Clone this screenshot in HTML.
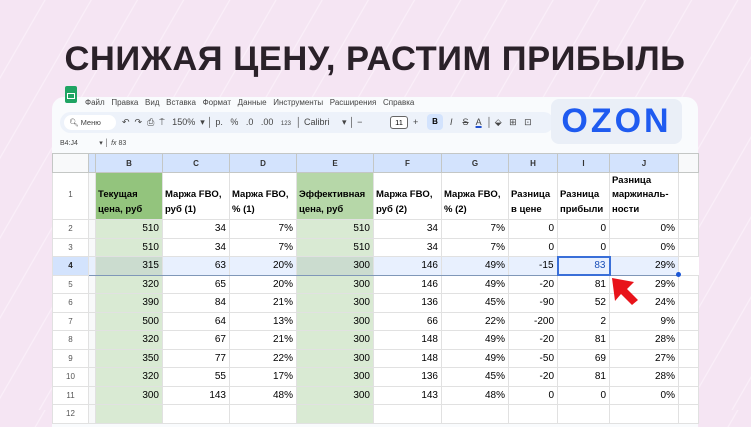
<!DOCTYPE html>
<html><head><meta charset="utf-8"><style>
*{margin:0;padding:0;box-sizing:border-box}
body{width:751px;height:410px;overflow:hidden;position:relative;font-family:"Liberation Sans",sans-serif;
background:repeating-linear-gradient(120deg,#f5e5f3 0px,#f5e5f3 38px,#fbf1fa 39px,#f5e5f3 40px);}
.title{position:absolute;left:52px;top:40px;width:646px;text-align:center;font-size:34.5px;font-weight:bold;color:#2a2129;letter-spacing:0.5px;white-space:nowrap}
.panel{position:absolute;left:52px;top:97px;width:646px;height:330px;background:#f9fbfd;border-radius:12px 12px 0 0}
.ab{position:absolute;white-space:nowrap}
.menu{top:98px;font-size:8px;color:#444}
.tb{position:absolute;left:60px;top:112px;width:494px;height:21px;background:#edf2fa;border-radius:11px}
.t{font-size:7.5px;color:#444}
.ozon{position:absolute;left:551px;top:99px;width:131px;height:45px;background:#eaeff7;border-radius:8px;color:#1f5bf0;font-size:34px;font-weight:bold;text-align:center;line-height:45px;letter-spacing:3px}
table{position:absolute;left:52px;top:153px;width:646px;border-collapse:collapse;table-layout:fixed;font-family:"Liberation Sans",sans-serif}
td{border:1px solid #e1e1e1;font-size:10px;text-align:right;padding:0 3px;height:18.5px;background:#fff;color:#000;overflow:hidden;white-space:nowrap}
tr.h td{background:#d3e3fd;text-align:center;font-weight:bold;font-size:8px;color:#333;height:19px;border-color:#c4c7c5}
td.rn{background:#fff;text-align:center;font-size:8px;color:#555}
tr.h td.rn{background:#f8f9fa}
td.gap{background:#f8f9fa;padding:0}
tr.r1 td{height:47px;text-align:left;font-weight:bold;font-size:9.5px;vertical-align:bottom;padding:0 2px 2px 2px;line-height:14.5px;white-space:normal}
tr.r1 td.rn{vertical-align:middle;text-align:center;font-weight:normal;font-size:8px}
td.g{background:#d9ead3}
tr.r1 td.gB{background:#93c47d}
tr.r1 td.gE{background:#b6d7a8}
tr.r4 td{background:#e8f0fe;border-top:1px solid #7f97b8;border-bottom:1px solid #7f97b8}
tr.r4 td.g{background:#cbdccf}
tr.r4 td.rn{background:#d3e3fd;font-weight:bold;color:#222;border-color:#e1e1e1}
tr.r4 td.sel{border:2px solid #3a6fd8;color:#1a4fb8}
</style></head><body>
<div class="title">СНИЖАЯ ЦЕНУ, РАСТИМ ПРИБЫЛЬ</div>
<div class="panel"></div>
<div class="ab" style="left:65px;top:86px;width:12px;height:17px;background:#1fa463;border-radius:2px"></div>
<div class="ab" style="left:67px;top:93px;width:8px;height:6px;border:1.5px solid #fff"></div>
<div class="ab menu" style="left:85px">Файл&nbsp;&nbsp; Правка&nbsp;&nbsp; Вид&nbsp;&nbsp; Вставка&nbsp;&nbsp; Формат&nbsp;&nbsp; Данные&nbsp;&nbsp; Инструменты&nbsp;&nbsp; Расширения&nbsp;&nbsp; Справка</div>
<div class="tb"></div>
<div class="ab" style="left:64px;top:115px;width:52px;height:15px;background:#fff;border-radius:8px"></div>
<div class="ab t" style="left:69px;top:118px">🔍︎ Меню</div>
<div class="ab t" style="left:122px;top:117px;font-size:9px">↶&nbsp; ↷&nbsp; ⎙&nbsp; ⍑&nbsp;&nbsp; 150%&nbsp; ▾ │ р.&nbsp;&nbsp; %&nbsp;&nbsp; .0&nbsp;&nbsp; .00&nbsp;&nbsp; <span style="font-size:6px">123</span>&nbsp; │ Calibri&nbsp;&nbsp;&nbsp;&nbsp; ▾ │ −</div>
<div class="ab" style="left:390px;top:116px;width:18px;height:13px;border:1px solid #666;border-radius:3px;font-size:7.5px;text-align:center;line-height:11px;background:#fff">11</div>
<div class="ab t" style="left:413px;top:117px;font-size:9px">+</div>
<div class="ab" style="left:427px;top:114px;width:16px;height:16px;background:#d3e3fd;border-radius:4px;font-size:8px;font-weight:bold;text-align:center;line-height:16px">B</div>
<div class="ab t" style="left:450px;top:117px;font-size:9px"><i>I</i>&nbsp;&nbsp;&nbsp; <s>S</s>&nbsp;&nbsp; <u style="text-decoration-color:#1f4fd0;text-decoration-thickness:2px">A</u>&nbsp; │ ⬙&nbsp;&nbsp; ⊞&nbsp;&nbsp; ⊡</div>
<div class="ozon">OZON</div>
<div class="ab" style="left:60px;top:139px;font-size:7px;color:#444">B4:J4&nbsp;&nbsp;&nbsp;&nbsp;&nbsp;&nbsp;&nbsp;&nbsp;&nbsp;&nbsp;&nbsp;▾ │ <i>fx</i> 83</div>
<table>
<colgroup><col style="width:36px"><col style="width:7px"><col style="width:67px"><col style="width:67px"><col style="width:67px"><col style="width:77px"><col style="width:68px"><col style="width:67px"><col style="width:49px"><col style="width:52px"><col style="width:69px"><col style="width:20px"></colgroup>
<tr class="h"><td class="rn"></td><td class="gap"></td><td>B</td><td>C</td><td>D</td><td>E</td><td>F</td><td>G</td><td>H</td><td>I</td><td>J</td><td class="rn"></td></tr>
<tr class="r1"><td class="rn">1</td><td class="gap"></td><td class="gB">Текущая цена, руб</td><td>Маржа FBO, руб (1)</td><td>Маржа FBO, % (1)</td><td class="gE">Эффективная цена, руб</td><td>Маржа FBO, руб (2)</td><td>Маржа FBO, % (2)</td><td>Разница в цене</td><td>Разница прибыли</td><td>Разница маржиналь-ности</td><td></td></tr>
<tr><td class="rn">2</td><td class="gap"></td><td class="g">510</td><td>34</td><td>7%</td><td class="g">510</td><td>34</td><td>7%</td><td>0</td><td>0</td><td>0%</td><td></td></tr>
<tr><td class="rn">3</td><td class="gap"></td><td class="g">510</td><td>34</td><td>7%</td><td class="g">510</td><td>34</td><td>7%</td><td>0</td><td>0</td><td>0%</td><td></td></tr>
<tr class="r4"><td class="rn">4</td><td class="gap"></td><td class="g">315</td><td>63</td><td>20%</td><td class="g">300</td><td>146</td><td>49%</td><td>-15</td><td class="sel">83</td><td>29%</td><td style="background:#fff;border:none"></td></tr>
<tr><td class="rn">5</td><td class="gap"></td><td class="g">320</td><td>65</td><td>20%</td><td class="g">300</td><td>146</td><td>49%</td><td>-20</td><td>81</td><td>29%</td><td></td></tr>
<tr><td class="rn">6</td><td class="gap"></td><td class="g">390</td><td>84</td><td>21%</td><td class="g">300</td><td>136</td><td>45%</td><td>-90</td><td>52</td><td>24%</td><td></td></tr>
<tr><td class="rn">7</td><td class="gap"></td><td class="g">500</td><td>64</td><td>13%</td><td class="g">300</td><td>66</td><td>22%</td><td>-200</td><td>2</td><td>9%</td><td></td></tr>
<tr><td class="rn">8</td><td class="gap"></td><td class="g">320</td><td>67</td><td>21%</td><td class="g">300</td><td>148</td><td>49%</td><td>-20</td><td>81</td><td>28%</td><td></td></tr>
<tr><td class="rn">9</td><td class="gap"></td><td class="g">350</td><td>77</td><td>22%</td><td class="g">300</td><td>148</td><td>49%</td><td>-50</td><td>69</td><td>27%</td><td></td></tr>
<tr><td class="rn">10</td><td class="gap"></td><td class="g">320</td><td>55</td><td>17%</td><td class="g">300</td><td>136</td><td>45%</td><td>-20</td><td>81</td><td>28%</td><td></td></tr>
<tr><td class="rn">11</td><td class="gap"></td><td class="g">300</td><td>143</td><td>48%</td><td class="g">300</td><td>143</td><td>48%</td><td>0</td><td>0</td><td>0%</td><td></td></tr>
<tr><td class="rn">12</td><td class="gap"></td><td class="g"></td><td></td><td></td><td class="g"></td><td></td><td></td><td></td><td></td><td></td><td></td></tr>
</table>
<div class="ab" style="left:676px;top:272px;width:5px;height:5px;background:#1a56d6;border-radius:50%"></div>
<svg class="ab" style="left:0;top:0" width="751" height="410"><polygon points="612,278 634,282 627,289 638,300 632,305 621,294 615,301" fill="#e8131a"/></svg>
</body></html>
